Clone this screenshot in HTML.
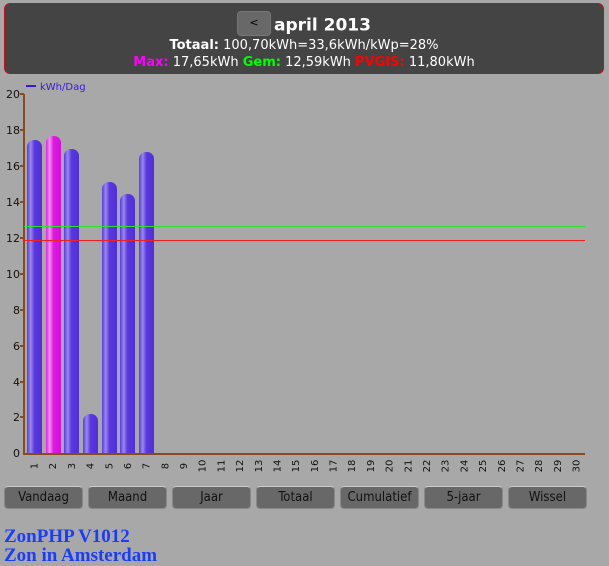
<!DOCTYPE html>
<html><head><meta charset="utf-8"><style>
body{margin:0;width:609px;height:566px;background:#a8a8a8;position:relative;overflow:hidden;font-family:"DejaVu Sans","Liberation Sans",sans-serif}
.hdr{position:absolute;left:4px;top:3px;width:598px;height:69px;background:#444;border:1px solid #c0101c;border-radius:6px;color:#fff;text-align:center}
.t1{position:absolute;top:9px;left:0;width:100%;font-weight:bold;font-size:17px}
.bk{display:inline-block;width:32px;height:23px;background:#686868;border:1px solid #777;border-radius:4px;font-size:11px;font-weight:normal;color:#000;line-height:22px;vertical-align:middle;margin-right:3px;position:relative;top:-2px}
.t2{position:absolute;top:34px;width:100%;font-size:13px}
.t3{position:absolute;top:51px;width:100%;font-size:13px}
.btn{position:absolute;top:486px;width:77px;height:21px;background:#686868;border:1px solid #888;border-top-color:#ccc;border-radius:4px;font-size:13px;line-height:21px;text-align:center;color:#111;font-family:"DejaVu Sans Condensed","Liberation Sans",sans-serif}
.ft{position:absolute;left:4px;font-family:"Liberation Serif",serif;font-weight:bold;font-size:19px;color:#1a3cff;line-height:19px}
</style></head><body>
<div class="hdr">
<div class="t1"><span class="bk">&lt;</span>april 2013</div>
<div class="t2"><b>Totaal:</b> 100,70kWh=33,6kWh/kWp=28%</div>
<div class="t3"><b style="color:#f0f">Max:</b> 17,65kWh <b style="color:#0f0">Gem:</b> 12,59kWh <b style="color:#f00">PVGIS:</b> 11,80kWh</div>
</div>
<svg width="609" height="480" style="position:absolute;left:0;top:0" font-family="DejaVu Sans, sans-serif">
<defs>
<linearGradient id="gb" x1="0" x2="1"><stop offset="0" stop-color="#5a3ae0"/><stop offset=".25" stop-color="#9888e8"/><stop offset=".5" stop-color="#5a36e0"/><stop offset="1" stop-color="#5030d8"/></linearGradient>
<linearGradient id="gp" x1="0" x2="1"><stop offset="0" stop-color="#e020e0"/><stop offset=".25" stop-color="#f090f0"/><stop offset=".5" stop-color="#e018e0"/><stop offset="1" stop-color="#d010d8"/></linearGradient>
</defs>
<line x1="26" y1="86" x2="36" y2="86" stroke="#3a18e0" stroke-width="2"/>
<text x="40" y="90" font-size="10" fill="#3a18e0">kWh/Dag</text>
<g font-size="11" fill="#111" text-anchor="end">
<text x="20" y="98">20</text><text x="20" y="134">18</text><text x="20" y="170">16</text><text x="20" y="206">14</text><text x="20" y="242">12</text><text x="20" y="278">10</text><text x="20" y="314">8</text><text x="20" y="350">6</text><text x="20" y="386">4</text><text x="20" y="421">2</text><text x="20" y="457">0</text>
</g>
<g stroke="#8a4a20" stroke-width="2">
<line x1="24" y1="94" x2="24" y2="454"/><line x1="23" y1="454" x2="585" y2="454"/>
<line x1="20" y1="94" x2="24" y2="94"/><line x1="20" y1="130" x2="24" y2="130"/><line x1="20" y1="166" x2="24" y2="166"/><line x1="20" y1="202" x2="24" y2="202"/><line x1="20" y1="238" x2="24" y2="238"/><line x1="20" y1="274" x2="24" y2="274"/><line x1="20" y1="310" x2="24" y2="310"/><line x1="20" y1="346" x2="24" y2="346"/><line x1="20" y1="382" x2="24" y2="382"/><line x1="20" y1="417" x2="24" y2="417"/>
</g>
<rect x="27" y="140" width="15" height="320" rx="7" fill="url(#gb)"/>
<rect x="46" y="136" width="15" height="324" rx="7" fill="url(#gp)"/>
<rect x="64" y="149" width="15" height="311" rx="7" fill="url(#gb)"/>
<rect x="83" y="414" width="15" height="46" rx="7" fill="url(#gb)"/>
<rect x="102" y="182" width="15" height="278" rx="7" fill="url(#gb)"/>
<rect x="120" y="194" width="15" height="266" rx="7" fill="url(#gb)"/>
<rect x="139" y="152" width="15" height="308" rx="7" fill="url(#gb)"/>
<rect x="23" y="455" width="580" height="25" fill="#a8a8a8"/>
<line x1="23" y1="454" x2="585" y2="454" stroke="#8a4a20" stroke-width="2"/>
<line x1="24" y1="226.5" x2="585" y2="226.5" stroke="#30e030" stroke-width="1"/>
<line x1="24" y1="240.5" x2="585" y2="240.5" stroke="#f02020" stroke-width="1"/>
<g font-size="10" fill="#111" id="xl"></g>
</svg>
<script>
var g=document.getElementById('xl'),s='';
for(var i=1;i<=30;i++){var x=34.5+(i-1)*18.69;s+='<text transform="translate('+(x+3)+',466) rotate(-90)" text-anchor="middle">'+i+'</text>';}
g.innerHTML=s;
</script>
<div class="btn" style="left:4px">Vandaag</div>
<div class="btn" style="left:88px">Maand</div>
<div class="btn" style="left:172px">Jaar</div>
<div class="btn" style="left:256px">Totaal</div>
<div class="btn" style="left:340px">Cumulatief</div>
<div class="btn" style="left:424px">5-jaar</div>
<div class="btn" style="left:508px">Wissel</div>
<div class="ft" style="top:527px">ZonPHP V1012</div>
<div class="ft" style="top:546px">Zon in Amsterdam</div>
</body></html>
